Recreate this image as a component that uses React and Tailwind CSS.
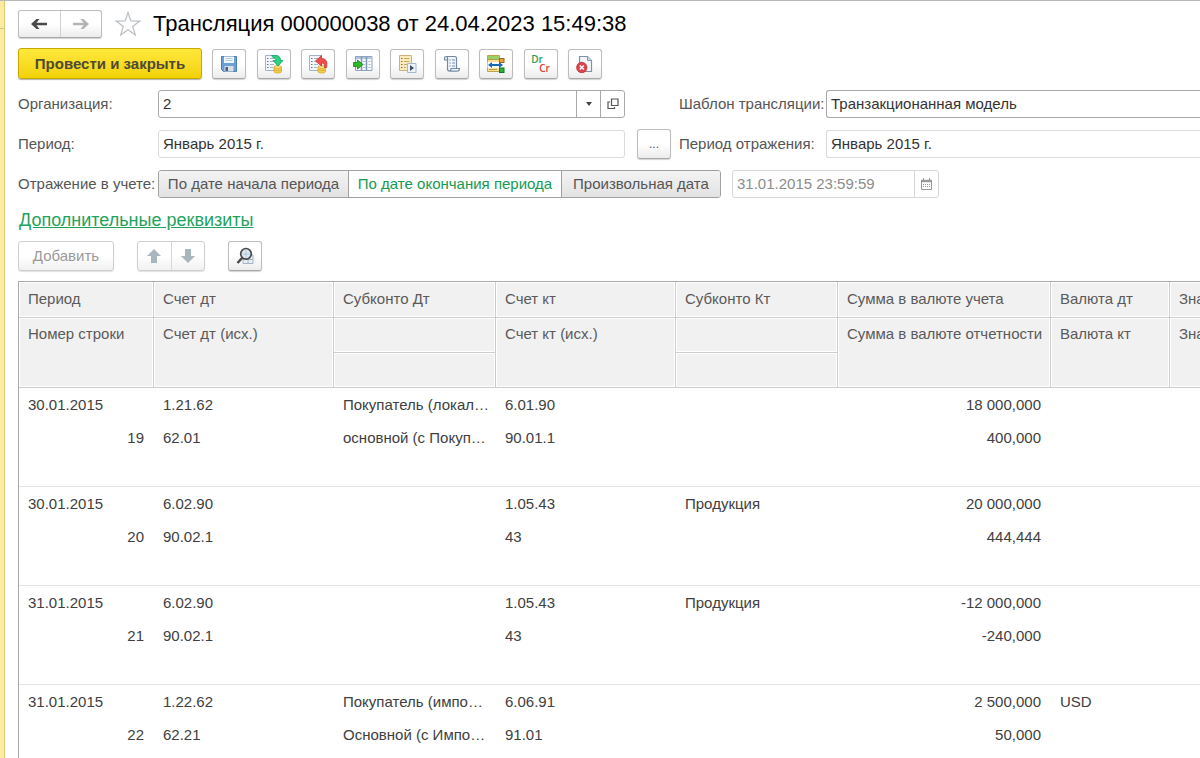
import React, { useState } from 'react';

const columns = [
  { top: 'Период', bottom: 'Номер строки', width: 'w-[135px]' },
  { top: 'Счет дт', bottom: 'Счет дт (исх.)', width: 'w-[180px]' },
  { top: 'Субконто Дт', split: true, width: 'w-[162px]' },
  { top: 'Счет кт', bottom: 'Счет кт (исх.)', width: 'w-[180px]' },
  { top: 'Субконто Кт', split: true, width: 'w-[162px]' },
  { top: 'Сумма в валюте учета', bottom: 'Сумма в валюте отчетности', width: 'w-[213px]' },
  { top: 'Валюта дт', bottom: 'Валюта кт', width: 'w-[119px]' },
  { top: 'Зна', bottom: 'Зна', width: 'w-[119px]' },
];

const entries = [
  {
    top: ['30.01.2015', '1.21.62', 'Покупатель (локал…', '6.01.90', '', '18 000,000', '', ''],
    bottom: ['19', '62.01', 'основной (с Покуп…', '90.01.1', '', '400,000', '', ''],
  },
  {
    top: ['30.01.2015', '6.02.90', '', '1.05.43', 'Продукция', '20 000,000', '', ''],
    bottom: ['20', '90.02.1', '', '43', '', '444,444', '', ''],
  },
  {
    top: ['31.01.2015', '6.02.90', '', '1.05.43', 'Продукция', '-12 000,000', '', ''],
    bottom: ['21', '90.02.1', '', '43', '', '-240,000', '', ''],
  },
  {
    top: ['31.01.2015', '1.22.62', 'Покупатель (импо…', '6.06.91', '', '2 500,000', 'USD', ''],
    bottom: ['22', '62.21', 'Основной (с Импо…', '91.01', '', '50,000', '', ''],
  },
];

const periodModes = ['По дате начала периода', 'По дате окончания периода', 'Произвольная дата'];

const buttonLook =
  'flex items-center justify-center rounded-[3px] border border-[#bdbdbd] border-b-[#a8a8a8] bg-linear-to-b from-white from-50% to-[#ececec] shadow-[0_1px_1px_rgba(0,0,0,0.18)]';

function SaveIcon() {
  return (
    <svg width="18" height="18" viewBox="0 0 18 18">
      <path d="M1.5 1.500h15v15h-13l-2-2z" fill="#6c9fd4" stroke="#4f7db3" />
      <rect x="4" y="1.500" width="10" height="6.500" fill="#f1f7fd" />
      <path d="M5.500 3.500h7M5.500 5.500h7" stroke="#b7cbe2" />
      <rect x="4.500" y="11" width="9" height="5.500" fill="#d8dfe7" />
      <rect x="5.500" y="12" width="2.500" height="4" fill="#4c5f78" />
    </svg>
  );
}

function PaperWithCoins() {
  return (
    <>
      <path d="M1.500 1.500h12v15h-12z" fill="#f4f7fa" stroke="#a3b3c4" />
      <path d="M3 4.500h1.500M3 7.500h1.500M3 10.500h1.500M3 13.500h1.500" stroke="#56789c" />
      <path d="M6 4.500h5M6 7.500h5M6 10.500h4M6 13.500h3" stroke="#a7b5c4" />
      <path d="M10 13v4.500c0 1 1.500 1.500 3.700 1.500s3.800-.5 3.800-1.500V13z" fill="#f3cf4d" stroke="#d6a832" strokeWidth=".8" />
      <ellipse cx="13.700" cy="13" rx="3.800" ry="1.400" fill="#fbe384" stroke="#d6a832" strokeWidth=".8" />
      <path d="M10 15.500c1 1.300 6.500 1.300 7.500 0" fill="none" stroke="#d6a832" strokeWidth=".8" />
    </>
  );
}

function PostIcon() {
  return (
    <svg width="20" height="20" viewBox="0 0 20 20">
      <PaperWithCoins />
      <path d="M7.500 1.500h4c3.500 0 5 1.500 5 5H19l-5 5.500-5-5.500h3c0-1.800-1-2.500-2.500-2.500z" fill="#2bd384" stroke="#17a263" strokeWidth=".8" />
    </svg>
  );
}

function UnpostIcon() {
  return (
    <svg width="20" height="20" viewBox="0 0 20 20">
      <PaperWithCoins />
      <path d="M18.500 13.500c1.300-6-.5-9-5-9V1.500L7.500 7l6 5V9c2.500 0 3.500 1.500 3 4.500z" fill="#ee4f49" stroke="#c93732" strokeWidth=".8" />
    </svg>
  );
}

function FillIcon() {
  return (
    <svg width="20" height="18" viewBox="0 0 20 18">
      <path d="M2.500 1.500h16.500v14H2.500z" fill="#f6f8fc" stroke="#8da3c0" />
      <path d="M3 2h15.500v2H3z" fill="#b3c5dd" />
      <path d="M8.500 2v13.500M13.500 2v13.500" stroke="#7f97b8" strokeWidth="1.500" />
      <path d="M10 6.500h2.500M10 9.500h2.500M10 12.500h2.500M15.500 6.500h2M15.500 9.500h2M15.500 12.500h2" stroke="#b3bfce" />
      <path d="M.5 7.500h4V5l5.500 4.500L4.500 14v-2.500h-4z" fill="#2dbb25" stroke="#16800f" strokeWidth=".8" />
    </svg>
  );
}

function RegisterIcon() {
  return (
    <svg width="19" height="20" viewBox="0 0 19 20">
      <path d="M1.500 1.500h12v15h-12z" fill="#fbeabb" stroke="#cdb07a" />
      <path d="M3 4.500h1.500M3 7.500h1.500M3 10.500h1.500M3 13.500h1.500" stroke="#8a6f38" />
      <path d="M6 4.500h5.500M6 7.500h5.500M6 10.500h3M6 13.500h2" stroke="#c6a866" />
      <path d="M9.500 9.500h8.500v9H9.500z" fill="#eef3f9" stroke="#a7b7ca" />
      <path d="M12 11l4 3-4 3z" fill="#3d4f68" />
    </svg>
  );
}

function ScrollIcon() {
  return (
    <svg width="18" height="18" viewBox="0 0 18 18" fill="#f3f7fb" stroke="#7489a5" strokeWidth="1.200">
      <path d="M4.500 4.500V14c0 1.300.8 2 2 2h7V3.500c0-1.200-.5-2-1.500-2H3c1 0 1.500.8 1.500 2z" />
      <path d="M4.500 5h-3V3.500c0-1.200.5-2 1.500-2s1.500.8 1.500 2z" />
      <path d="M8 13.500h8.500c0 1.500-.7 2.500-2 2.500h-8c1 0 1.500-1 1.500-2.500z" />
      <path d="M6.500 5h1M6.500 8h1M6.500 11h1" stroke="#3e5f8a" />
      <path d="M9 5h3M9 8h3M9 11h3" />
    </svg>
  );
}

function MatchIcon() {
  return (
    <svg width="20" height="20" viewBox="0 0 20 20">
      <path d="M1.500 1.500h12v16h-12z" fill="#f8e29b" stroke="#c0a04c" />
      <path d="M2 2h11v3H2z" fill="#9bcf68" />
      <path d="M2 5.500h11M3 15.500h8" stroke="#b9983f" />
      <path d="M1.500 8h16v6h-16z" fill="#fff" />
      <path d="M2 11l4-3v2h7V8l4 3-4 3v-2H6v2z" fill="#1769b5" />
      <rect x="13.500" y="4.500" width="4.500" height="4" fill="#e4a840" stroke="#9b6a19" />
      <rect x="13.500" y="14" width="4.500" height="4.500" fill="#28b43b" stroke="#13771f" />
    </svg>
  );
}

function DrCrIcon() {
  return (
    <span className="flex flex-col font-['Open_Sans',sans-serif] text-[10px] leading-[9px] font-semibold">
      <span className="self-start text-[#1f9d55]">Dr</span>
      <span className="pl-2 text-[#d1463c]">Cr</span>
    </span>
  );
}

function CancelIcon() {
  return (
    <svg width="18" height="18" viewBox="0 0 18 18">
      <path d="M3.500 1.500h8l4 4v11h-12z" fill="#f3f6f9" stroke="#7e92ab" strokeWidth="1.200" />
      <path d="M11.500 1.500v4h4" fill="#d6dfe9" stroke="#7e92ab" />
      <circle cx="5.800" cy="12.500" r="5.200" fill="#d9454a" stroke="#bb3035" strokeWidth=".8" />
      <path d="M3.800 10.500l4 4M7.800 10.500l-4 4" stroke="#fff" strokeWidth="1.500" />
    </svg>
  );
}

const tools = [
  { label: 'Записать', Icon: SaveIcon },
  { label: 'Провести', Icon: PostIcon },
  { label: 'Отмена проведения', Icon: UnpostIcon },
  { label: 'Заполнить', Icon: FillIcon },
  { label: 'Движения', Icon: RegisterIcon },
  { label: 'Отчет', Icon: ScrollIcon },
  { label: 'Соответствия', Icon: MatchIcon },
  { label: 'Проводки', Icon: DrCrIcon },
  { label: 'Удалить', Icon: CancelIcon },
];

function NavArrow({ back }) {
  return (
    <svg width="18" height="12" viewBox="0 0 18 12" fill={back ? '#4a4a4a' : '#b4b4b4'}>
      <path d={back ? 'M1 6l5.500-5H9.500L6.500 4.700H17v2.600H6.500l3 3.700H6.500z' : 'M17 6l-5.500-5H8.500l3 3.700H1v2.600h10.500l-3 3.700h3z'} />
    </svg>
  );
}

function MoveArrow({ down }) {
  return (
    <svg width="14" height="14" viewBox="0 0 14 14" fill="#a9b6be">
      <path d={down ? 'M4 0h6v7h4l-7 7-7-7h4z' : 'M4 14h6V7h4L7 0 0 7h4z'} />
    </svg>
  );
}

function Header() {
  return (
    <header className="flex items-center">
      <div className={`${buttonLook} h-7 w-[84px]`}>
        <button type="button" aria-label="Назад" className="flex h-full flex-1 items-center justify-center border-r border-[#d0d0d0]">
          <NavArrow back />
        </button>
        <button type="button" aria-label="Вперед" className="flex h-full flex-1 items-center justify-center">
          <NavArrow />
        </button>
      </div>
      <button type="button" aria-label="В избранное" className="ml-3">
        <svg width="28" height="28" viewBox="0 0 28 28" fill="#fff" stroke="#b9bec4" strokeWidth="1.200">
          <path d="M14 2.500l2.900 8.400 8.900.2-7.100 5.300 2.600 8.600L14 19.800 6.700 25l2.600-8.600-7.100-5.300 8.900-.2z" />
        </svg>
      </button>
      <h1 className="ml-[11px] text-[22px] leading-7 whitespace-nowrap text-black">
        Трансляция 000000038 от 24.04.2023 15:49:38
      </h1>
    </header>
  );
}

function Toolbar() {
  return (
    <div className="mt-[10px] flex items-center gap-[10px]">
      <button
        type="button"
        className="h-[31px] w-[184px] rounded-[3px] border border-[#c6a800] bg-linear-to-b from-[#ffe83a] to-[#f2d200] pt-px text-[15px] font-bold whitespace-nowrap text-[#4f4a33] shadow-[0_1px_1px_rgba(0,0,0,0.3)]"
      >
        Провести и закрыть
      </button>
      <div className="flex w-[390px] justify-between">
        {tools.map(({ label, Icon }) => (
          <button key={label} type="button" aria-label={label} className={`${buttonLook} h-[30px] w-[34px]`}>
            <Icon />
          </button>
        ))}
      </div>
    </div>
  );
}

function Details() {
  const [mode, setMode] = useState(1);

  return (
    <div className="mt-[11px] flex flex-col gap-3 text-[#555]">
      <div className="flex h-7 items-center">
        <label htmlFor="organization" className="w-[140px] shrink-0">Организация:</label>
        <div className="flex h-full w-[467px] shrink-0 rounded-[3px] border border-[#a9a9a9]">
          <input id="organization" defaultValue="2" className="min-w-0 flex-1 px-1 text-[#333] outline-none" />
          <button type="button" aria-label="Выбрать" className="flex w-6 items-center justify-center border-l border-[#a9a9a9]">
            <svg width="6" height="4" viewBox="0 0 6 4" fill="#444"><path d="M0 0h6L3 4z" /></svg>
          </button>
          <button type="button" aria-label="Открыть" className="flex w-6 items-center justify-center border-l border-[#a9a9a9]">
            <svg width="12" height="12" viewBox="0 0 12 12" fill="none" stroke="#555" strokeWidth="1.200">
              <path d="M4.500 1H11v6.500H4.500z" />
              <path d="M3 4H1v6.500h6.500V9" />
            </svg>
          </button>
        </div>
        <label htmlFor="template" className="ml-[54px] w-[147px] shrink-0 whitespace-nowrap">Шаблон трансляции:</label>
        <input
          id="template"
          defaultValue="Транзакционанная модель"
          className="h-full min-w-0 flex-1 rounded-l-[3px] border border-r-0 border-[#a9a9a9] px-1 pb-0.5 text-[#333] outline-none"
        />
      </div>

      <div className="flex h-7 items-center">
        <label htmlFor="period" className="w-[140px] shrink-0">Период:</label>
        <input
          id="period"
          defaultValue="Январь 2015 г."
          className="h-full w-[467px] shrink-0 rounded-[3px] border border-[#dadada] px-1 pb-0.5 text-[#333] outline-none"
        />
        <button type="button" aria-label="Выбрать период" className={`${buttonLook} ml-3 h-[30px] w-[34px] shrink-0 text-xs`}>
          ...
        </button>
        <label htmlFor="reflection" className="ml-2 w-[147px] shrink-0 whitespace-nowrap">Период отражения:</label>
        <input
          id="reflection"
          defaultValue="Январь 2015 г."
          className="h-full min-w-0 flex-1 rounded-l-[3px] border border-r-0 border-[#dadada] px-1 pb-0.5 text-[#333] outline-none"
        />
      </div>

      <div className="flex h-7 items-center">
        <span id="mode-label" className="w-[140px] shrink-0 whitespace-nowrap">Отражение в учете:</span>
        <div
          role="group"
          aria-labelledby="mode-label"
          className="grid h-full w-[563px] shrink-0 grid-cols-[189px_213px_1fr] overflow-hidden rounded-[3px] border border-[#a0a0a0]"
        >
          {periodModes.map((title, i) => (
            <button
              key={title}
              type="button"
              aria-pressed={mode === i}
              onClick={() => setMode(i)}
              className={`border-[#a0a0a0] whitespace-nowrap ${i > 0 ? 'border-l' : ''} ${
                mode === i ? 'bg-white text-[#159a50]' : 'bg-linear-to-b from-[#f4f4f4] to-[#e2e2e2]'
              }`}
            >
              {title}
            </button>
          ))}
        </div>
        <div className="ml-[11px] flex h-full w-[207px] shrink-0 rounded-[3px] border border-[#d6d6d6]">
          <input
            aria-label="Дата отражения"
            defaultValue="31.01.2015 23:59:59"
            className="min-w-0 flex-1 px-1 text-[#8c8c8c] outline-none"
          />
          <button type="button" aria-label="Календарь" className="flex w-6 items-center justify-center border-l border-[#d6d6d6]">
            <svg width="11" height="12" viewBox="0 0 11 12" fill="none" stroke="#999">
              <path d="M.5 2.500h10v9H.5z" />
              <path d="M0 3h11" strokeWidth="2.500" />
              <path d="M2.500 0v2M8.500 0v2" />
              <path d="M2 6.500h7M2 8.500h7" strokeDasharray="1 1" />
            </svg>
          </button>
        </div>
      </div>
    </div>
  );
}

function TableCommands() {
  return (
    <div className="mt-[9px] flex items-center">
      <button
        type="button"
        disabled
        className="h-[30px] w-24 rounded-[3px] border border-[#cfcfcf] bg-linear-to-b from-white from-50% to-[#f1f1f1] text-[#9a9a9a] shadow-[0_1px_1px_rgba(0,0,0,0.12)]"
      >
        Добавить
      </button>
      <div className="ml-[23px] flex h-[30px] w-[68px] rounded-[3px] border border-[#cfcfcf] bg-linear-to-b from-white from-50% to-[#f1f1f1] shadow-[0_1px_1px_rgba(0,0,0,0.12)]">
        <button type="button" aria-label="Переместить вверх" className="flex flex-1 items-center justify-center border-r border-[#d6d6d6]">
          <MoveArrow />
        </button>
        <button type="button" aria-label="Переместить вниз" className="flex flex-1 items-center justify-center">
          <MoveArrow down />
        </button>
      </div>
      <button type="button" aria-label="Найти" className={`${buttonLook} ml-[23px] h-[30px] w-[34px]`}>
        <svg width="18" height="18" viewBox="0 0 18 18">
          <path d="M7 8h10v8.500H7z" fill="#e8eef4" stroke="#a5b4c4" />
          <path d="M12 8v8M7 12.500h10" stroke="#a5b4c4" />
          <circle cx="10" cy="6.800" r="5.300" fill="#dbe8f3" stroke="#4a4a4a" strokeWidth="1.700" />
          <path d="M10 3v7.500M6.500 7h7" stroke="#b4c6d6" />
          <path d="M6.500 10.500L1.500 16" stroke="#4a4a4a" strokeWidth="2.500" />
        </svg>
      </button>
    </div>
  );
}

const headCell =
  'overflow-hidden border-r border-b border-[#cdcdcd] bg-[#f1f1f1] px-[9px] text-left align-top font-normal whitespace-nowrap text-[#5a5a5a] shadow-[inset_1px_1px_0_#fff,inset_-1px_-1px_0_#fff]';

function EntriesTable() {
  const cell = (value, i, top) => (
    <td
      key={i}
      className={`overflow-hidden pr-[10px] pl-[9px] align-top leading-[33px] whitespace-nowrap ${
        i === 5 || (i === 0 && !top) ? 'text-right' : ''
      } ${top ? '' : 'border-b border-[#e4e4e4]'}`}
    >
      {value}
    </td>
  );

  return (
    <div className="mt-[10px] overflow-hidden border-t border-l border-[#a9a9a9]">
      <table className="w-[1270px] table-fixed border-separate border-spacing-0 text-[#404040]">
        <colgroup>
          {columns.map((column, i) => (
            <col key={i} className={column.width} />
          ))}
        </colgroup>
        <thead>
          <tr className="h-9">
            {columns.map((column, i) => (
              <th key={i} className={`${headCell} leading-[34px]`}>{column.top}</th>
            ))}
          </tr>
          <tr className="h-[35px]">
            {columns.map((column, i) => (
              <th key={i} rowSpan={column.split ? 1 : 2} className={`${headCell} leading-8`}>{column.bottom}</th>
            ))}
          </tr>
          <tr className="h-[35px]">
            {columns.filter((column) => column.split).map((column) => (
              <th key={column.top} className={headCell}></th>
            ))}
          </tr>
        </thead>
        <tbody>
          {entries.map((entry, row) => (
            <React.Fragment key={row}>
              <tr className="h-[33px]">{entry.top.map((value, i) => cell(value, i, true))}</tr>
              <tr className="h-[66px]">{entry.bottom.map((value, i) => cell(value, i, false))}</tr>
            </React.Fragment>
          ))}
        </tbody>
      </table>
    </div>
  );
}

export default function App() {
  return (
    <div className="flex h-screen overflow-hidden border-t border-[#b9b9b9] bg-white font-['Liberation_Sans',Arial,sans-serif] text-[15px]">
      <aside className="w-[5px] shrink-0 border-r border-[#d9c878] bg-[#fdec9f]">
        <div className="h-7 border-b border-[#d9c878]"></div>
      </aside>
      <main className="min-w-0 flex-1 pt-[9px] pl-[13px]">
        <Header />
        <Toolbar />
        <Details />
        <a href="#details" className="mt-[10px] ml-px block w-fit text-lg leading-6 text-[#1fa35c] underline">
          Дополнительные реквизиты
        </a>
        <TableCommands />
        <EntriesTable />
      </main>
    </div>
  );
}
